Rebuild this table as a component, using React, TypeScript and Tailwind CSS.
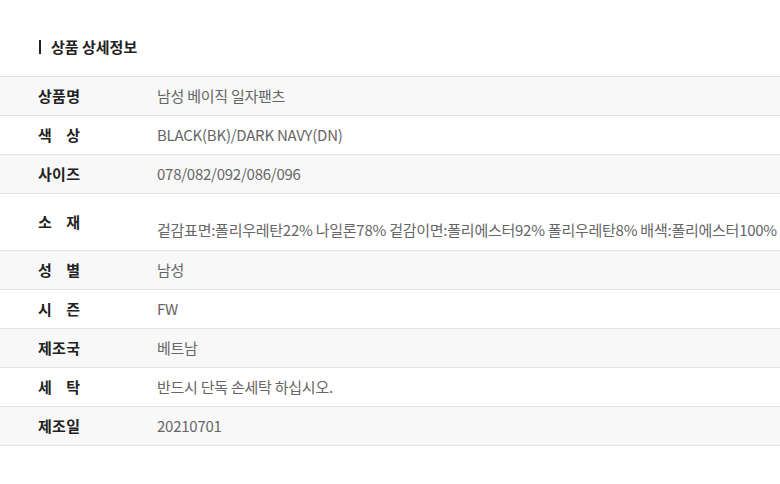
import React from 'react';

const rows = [
  { label: '상품명', value: '남성 베이직 일자팬츠' },
  { label: '색상', value: 'BLACK(BK)/DARK NAVY(DN)' },
  { label: '사이즈', value: '078/082/092/086/096' },
  { label: '소재', value: '겉감표면:폴리우레탄22% 나일론78% 겉감이면:폴리에스터92% 폴리우레탄8% 배색:폴리에스터100%', tall: true },
  { label: '성별', value: '남성' },
  { label: '시즌', value: 'FW' },
  { label: '제조국', value: '베트남' },
  { label: '세탁', value: '반드시 단독 손세탁 하십시오.' },
  { label: '제조일', value: '20210701' },
];

const App: React.FC = () => {
  return (
    <div className="w-[780px] h-[484px] bg-white overflow-hidden" style={{ fontFamily: '"Noto Sans CJK KR", "Noto Sans", sans-serif' }}>
      <div className="pt-[36px] pl-[39px] flex items-center gap-[10px] h-[57px]">
        <span className="w-[2px] h-[14px] bg-[#222]"></span>
        <h2 className="text-[15px] font-bold text-[#222] leading-none">상품 상세정보</h2>
      </div>
      <div className="mt-[19px] w-[820px] border-t border-[#e2e2e2]">
        {rows.map((r, i) => (
          <div
            key={i}
            className={`flex border-b border-[#e2e2e2] ${r.tall ? 'h-[57px]' : 'h-[39px]'} ${i % 2 === 0 ? 'bg-[#f8f8f8]' : 'bg-white'}`}
          >
            <div className="w-[157px] pl-[38px] pb-[2px] flex items-center">
              <span className="flex justify-between w-[42px] text-[15px] font-bold text-[#222] leading-none">
                {r.label.split('').map((c, j) => (
                  <span key={j}>{c}</span>
                ))}
              </span>
            </div>
            <div className={`flex-1 flex items-center text-[15px] text-[#666] whitespace-nowrap leading-none tracking-[-0.25px] ${r.tall ? 'pt-[14px]' : 'pb-[2px]'}`}>
              {r.value}
            </div>
          </div>
        ))}
      </div>
    </div>
  );
};

export default App;
